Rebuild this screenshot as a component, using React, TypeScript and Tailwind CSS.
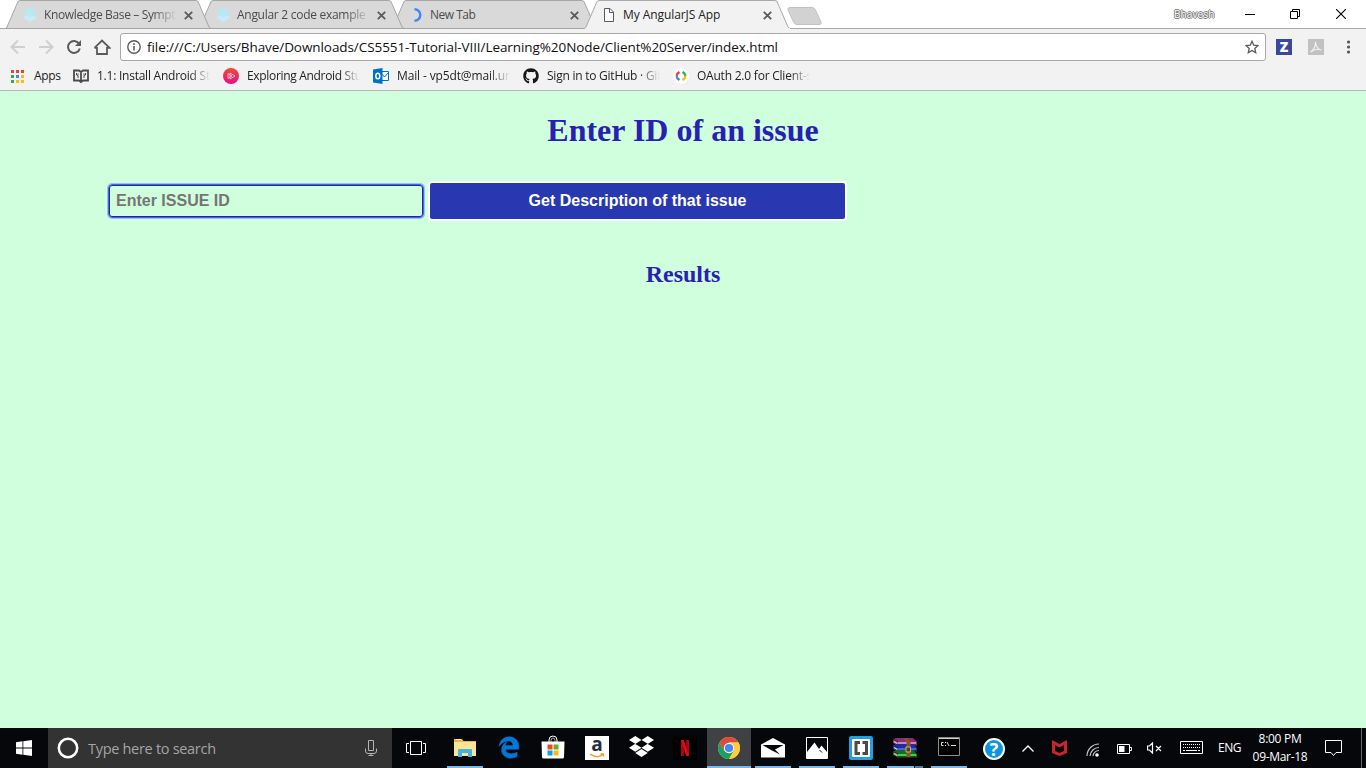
import React from "react";
import { FaDropbox, FaEdgeLegacy, FaGithub } from "react-icons/fa";

type IconProps = { w: number; h: number; className?: string; children: React.ReactNode };

function Icon({ w, h, className = "", children }: IconProps) {
  return (
    <svg width={w} height={h} viewBox={`0 0 ${w} ${h}`} fill="none" className={`block shrink-0 ${className}`}>
      {children}
    </svg>
  );
}

const fade = "[mask-image:linear-gradient(to_right,black_82%,transparent)]";

/* ---------- tab strip ---------- */

function LayersIcon() {
  return (
    <Icon w={16} h={16}>
      <path d="M8 6.500 15 10.500 8 15 1 10.500Z" fill="#c6edf7" />
      <path d="M8 .5 15 5.500 8 10.500 1 5.500Z" fill="#b4e9f6" />
    </Icon>
  );
}

function SpinnerIcon() {
  return (
    <Icon w={16} h={16}>
      <path d="M6.500 2.200A5.800 5.800 0 0 1 6.500 13.800" stroke="#4285f4" strokeWidth="2.400" />
    </Icon>
  );
}

function FileIcon() {
  return (
    <Icon w={16} h={16}>
      <path d="M3.500 1.500H9L12.500 5V14.500H3.500Z" fill="#fafafa" stroke="#5a5a5a" />
      <path d="M8.500 1.500V5.500H12.500" stroke="#5a5a5a" />
    </Icon>
  );
}

function Tab({ title, icon, active = false, order, tracking, faded = false }: {
  title: string; icon: React.ReactNode; active?: boolean; order: string; tracking: string; faded?: boolean;
}) {
  return (
    <div className={`relative -mr-3 h-[29px] w-[205px] shrink-0 ${order}`}>
      <svg width="205" height="29" className="absolute inset-0">
        <path
          d="M0 28.500 1 27 12 1.500 14 .5H190L192 1.500 203 27 205 28.500"
          fill={active ? "#f2f2f2" : "#d9d9d9"}
          stroke={active ? "#a9a9a9" : "#a6a6a6"}
        />
        <path d="M0 28.500H205" stroke={active ? "#f2f2f2" : "#a6a6a6"} />
      </svg>
      <div className="relative flex h-full items-center pl-4">
        <span className="w-[22px]">{icon}</span>
        <span className={`w-[133px] overflow-hidden text-[12px] leading-4 whitespace-nowrap ${tracking} ${active ? "text-[#222]" : "text-[#4c4c4c]"} ${faded ? fade : ""}`}>
          {title}
        </span>
        <Icon w={9} h={9} className="mt-px ml-[7px]">
          <path d="M.8.8 8.200 8.200M8.200.8.8 8.200" stroke="#5a5a5a" strokeWidth="1.800" />
        </Icon>
      </div>
    </div>
  );
}

function TabStrip() {
  return (
    <div className="flex h-[29px] items-start bg-white pl-1.5 shadow-[inset_0_-1px_#a9a9a9]">
      <Tab title="Knowledge Base – Sympt" icon={<LayersIcon />} order="z-30" tracking="tracking-[-0.36px]" faded />
      <Tab title="Angular 2 code example -" icon={<LayersIcon />} order="z-20" tracking="tracking-[-0.28px]" faded />
      <Tab title="New Tab" icon={<SpinnerIcon />} order="z-10" tracking="tracking-[-0.5px]" />
      <Tab title="My AngularJS App" icon={<FileIcon />} active order="z-40" tracking="tracking-[-0.08px]" />
      <Icon w={36} h={18} className="mt-[7px] ml-[9px]">
        <path d="M3 .5H25Q27.500.5 28.500 3L34 15Q35 17.500 32 17.500H10Q7.500 17.500 6.500 15L1 3Q.5.5 3 .5Z" fill="#d2d2d2" stroke="#c2c2c2" />
      </Icon>
      <div className="ml-auto flex h-[27px] items-center">
        <span className="mr-[31px] w-10 text-[10px] leading-3 tracking-[0.1px] text-white [text-shadow:1px_0_#777,-1px_0_#777,0_1px_#777,0_-1px_#777]">Bhavesh</span>
        <Icon w={10} h={10} className="mr-[35px]"><path d="M0 5.500H10" stroke="#000" /></Icon>
        <Icon w={10} h={10} className="mr-[36px]">
          <path d="M.5 2.500H7.500V9.500H.5ZM2.500 2.500V.5H9.500V7.500H7.500" stroke="#000" />
        </Icon>
        <Icon w={10} h={10} className="mr-5"><path d="M0 0 10 10M10 0 0 10" stroke="#000" strokeWidth="1.100" /></Icon>
      </div>
    </div>
  );
}

/* ---------- toolbar ---------- */

function Toolbar() {
  return (
    <div className="flex h-9 items-center pl-[10px]">
      <Icon w={16} h={16} className="mr-3">
        <path d="M15 8H2M8 1.500 1.500 8 8 14.500" stroke="#cfcfcf" strokeWidth="2" />
      </Icon>
      <Icon w={16} h={16} className="mr-3">
        <path d="M1 8H14M8 1.500 14.500 8 8 14.500" stroke="#cfcfcf" strokeWidth="2" />
      </Icon>
      <Icon w={16} h={16} className="mr-[11px]">
        <path d="M13 4.600A6 6 0 1 0 13.800 9.500" stroke="#5a5a5a" strokeWidth="2" />
        <path d="M15 1V7H9Z" fill="#5a5a5a" />
      </Icon>
      <Icon w={18} h={18} className="mr-[9px]">
        <path d="M4 9V16H14V9M1.500 9.800 9 2.500 16.500 9.800H13.500M1.500 9.800H4.500" stroke="#5a5a5a" strokeWidth="1.800" />
      </Icon>
      <div className="flex h-7 w-[1146px] items-center rounded-[3px] border border-[#a8a8a8] bg-white pr-[6px] pl-[6px]">
        <Icon w={14} h={14}>
          <circle cx="7" cy="7" r="6.200" stroke="#5a5a5a" strokeWidth="1.400" />
          <path d="M7 6V10.500M7 3.300V4.900" stroke="#5a5a5a" strokeWidth="1.600" />
        </Icon>
        <span className="ml-[6px] text-[13.500px] leading-5 tracking-[-0.075px] whitespace-nowrap text-[#111]">
          file:///C:/Users/Bhave/Downloads/CS5551-Tutorial-VIII/Learning%20Node/Client%20Server/index.html
        </span>
        <Icon w={14} h={14} className="ml-auto">
          <path d="M7 1.300 8.700 5.200 13 5.600 9.800 8.400 10.700 12.700 7 10.400 3.300 12.700 4.200 8.400 1 5.600 5.300 5.200Z" stroke="#5a5a5a" strokeWidth="1.300" />
        </Icon>
      </div>
      <span className="ml-[10px] flex h-4 w-4 items-center justify-center bg-[#39489b] text-[14px] leading-4 font-extrabold text-white">Z</span>
      <Icon w={16} h={16} className="ml-4">
        <path d="M0 0H16V16H0Z" fill="#c1c1c1" />
        <path d="M2.500 13C5 11.500 8 7 7.500 3C8 8 10 10.500 13.500 11C10 9.500 6 10.500 2.500 13Z" stroke="#f1f1f1" strokeWidth="1.200" />
      </Icon>
      <Icon w={4} h={14} className="ml-[22px]">
        <circle cx="2.500" cy="2" r="1.600" fill="#5a5a5a" /><circle cx="2.500" cy="7" r="1.600" fill="#5a5a5a" /><circle cx="2.500" cy="12" r="1.600" fill="#5a5a5a" />
      </Icon>
    </div>
  );
}

/* ---------- bookmarks ---------- */

const appDots = ["#ea4335", "#ea4335", "#ea4335", "#34a853", "#4285f4", "#fbbc05", "#34a853", "#fbbc05", "#fbbc05"];

function Bookmark({ title, tracking, children }: { title: string; tracking: string; children: React.ReactNode }) {
  return (
    <div className="flex w-[150px] shrink-0 items-center gap-2">
      {children}
      <span className={`w-[113px] overflow-hidden text-[12px] leading-4 whitespace-nowrap text-[#222] ${tracking} ${fade}`}>{title}</span>
    </div>
  );
}

function BookmarkBar() {
  return (
    <div className="flex h-[26px] items-center border-b border-[#b6b6b6] pb-[3px] pl-[11px]">
      <Icon w={13} h={13}>
        {appDots.map((color, i) => (
          <rect key={i} x={(i % 3) * 5} y={Math.floor(i / 3) * 5} width="3" height="3" fill={color} />
        ))}
      </Icon>
      <span className="ml-[10px] w-[39px] text-[12px] leading-4 tracking-[-0.3px] text-[#222]">Apps</span>
      <Bookmark title="1.1: Install Android Stu" tracking="tracking-[-0.24px]">
        <Icon w={16} h={16}>
          <path d="M1 2.500H6L8 4 10 2.500H15V12.500H10L8 14 6 12.500H1ZM8 4V14" stroke="#4a4a4a" strokeWidth="1.800" />
          <path d="M3.500 5V7L5 7.500V10M12.500 5V7L11 7.500V10M5 5.500V7M11 5.500V7" stroke="#4a4a4a" />
        </Icon>
      </Bookmark>
      <Bookmark title="Exploring Android Stu" tracking="tracking-[-0.32px]">
        <Icon w={16} h={16}>
          <defs><linearGradient id="play" x1="0" y1="0" x2="0" y2="1"><stop stopColor="#ef4b32" /><stop offset="1" stopColor="#e90d8b" /></linearGradient></defs>
          <circle cx="8" cy="8" r="8" fill="url(#play)" />
          <path d="M5 5.500V10.500M7 5V11L12 8ZM5 5.500 9 8 5 10.500" stroke="#fbc3cf" strokeWidth=".9" />
        </Icon>
      </Bookmark>
      <Bookmark title="Mail - vp5dt@mail.umk" tracking="tracking-[-0.13px]">
        <Icon w={16} h={16}>
          <path d="M8 3.500H15.500V12.500H8M8 5 11.500 9 15.500 4.500" fill="#fff" stroke="#0072c6" />
          <path d="M0 1.500 9.500 0V16L0 14.500Z" fill="#0072c6" />
          <ellipse cx="4.800" cy="8" rx="2" ry="2.800" stroke="#fff" strokeWidth="1.500" />
        </Icon>
      </Bookmark>
      <Bookmark title="Sign in to GitHub · Git" tracking="tracking-[-0.24px]">
        <FaGithub className="h-4 w-4 shrink-0 text-[#191717]" />
      </Bookmark>
      <Bookmark title="OAuth 2.0 for Client-s" tracking="tracking-[-0.22px]">
        <Icon w={16} h={16}>
          <circle cx="8" cy="8" r="8" fill="#fff" />
          <path d="M6.500 4 4.500 5.500 3.500 8" stroke="#ea4335" strokeWidth="2.200" />
          <path d="M3.500 8 4.500 10.500 6.500 12" stroke="#4285f4" strokeWidth="2.200" />
          <path d="M9.500 4 11.500 5.500 12.500 8" stroke="#34a853" strokeWidth="2.200" />
          <path d="M12.500 8 11.500 10.500 9.500 12" stroke="#fbbc05" strokeWidth="2.200" />
        </Icon>
      </Bookmark>
    </div>
  );
}

/* ---------- page ---------- */

function IssuePage() {
  return (
    <main className="flex-1 bg-[#cfffdc] pt-[21px] text-[#2a1fb4]">
      <h1 className="text-center font-['Liberation_Serif',serif] text-[32px] leading-[37px] font-bold">Enter ID of an issue</h1>
      <div className="mt-8 flex h-10 items-center gap-1 pl-[108px] font-['Liberation_Sans',sans-serif] text-base font-bold">
        <input
          placeholder="Enter ISSUE ID"
          className="h-[34px] w-[316px] rounded-[4px] border border-[#4a63d8] bg-transparent px-[7px] pb-px shadow-[0_0_0_1px_#8fc8ee,inset_0_0_0_1px_#2a1fb4] outline-none placeholder:text-[#757575] placeholder:opacity-100"
        />
        <button className="h-10 w-[419px] rounded border-2 border-white bg-[#2838b0] pb-px text-white">Get Description of that issue</button>
      </div>
      <h2 className="mt-[39px] text-center font-['Liberation_Serif',serif] text-2xl leading-7 font-bold">Results</h2>
    </main>
  );
}

/* ---------- taskbar ---------- */

function Task({ open = false, active = false, grouped = false, children }: {
  open?: boolean; active?: boolean; grouped?: boolean; children: React.ReactNode;
}) {
  return (
    <div className={`flex h-10 w-11 shrink-0 flex-col items-center ${active ? "bg-[#404144]" : ""}`}>
      <div className="flex h-[38px] items-center justify-center pt-0.5">{children}</div>
      {(open || active) && (
        <div className={`flex h-0.5 justify-end bg-[#76b9ed] ${active ? "w-full" : "w-9"}`}>
          {grouped && <div className="w-[9px] border-l border-[#05070b] bg-[#4f7f9f]" />}
        </div>
      )}
    </div>
  );
}

function ChromeLogo() {
  return (
    <Icon w={22} h={22}>
      <circle cx="11" cy="11" r="11" fill="#ffcd40" />
      <path d="M1.500 5.500A11 11 0 0 1 20.500 5.500H11L6.200 13.700Z" fill="#dd4b3e" />
      <path d="M1.500 5.500A11 11 0 0 0 11 22L15.800 13.800 11 16 6.200 13.700Z" fill="#1aa15f" />
      <path d="M20.500 5.500A11 11 0 0 1 11 22L15.800 13.800 15 7 11 5.500Z" fill="#ffcd40" />
      <circle cx="11" cy="11" r="5.200" fill="#f1f1f1" />
      <circle cx="11" cy="11" r="4.100" fill="#4587f3" />
    </Icon>
  );
}

function WinRarLogo() {
  const books = [["#8a2f73", "#d585bd"], ["#1b2fa0", "#4a62e0"], ["#146b22", "#3fd13f"]];
  return (
    <Icon w={24} h={20}>
      {books.map(([dark, light], i) => (
        <g key={dark} transform={`translate(0 ${i * 6})`}>
          <path d="M0 1.500 3 0H20L24 4V7.500H5L0 5Z" fill={dark} />
          <path d="M5 4H23V6H5Z" fill={light} />
          <path d="M5 7H23M0 1.500 5 4" stroke="#3a1e38" />
          <path d="M1 3.500 4.500 5.500" stroke="#ded6c8" strokeWidth="1.400" />
        </g>
      ))}
      <path d="M11 0H14L17.500 4V19H13.500V4Z" fill="#8a5428" />
      <path d="M13 9H17.500V14H13Z" fill="#5b3a20" stroke="#c9b36a" />
    </Icon>
  );
}

function Taskbar() {
  return (
    <footer className="flex h-10 items-center bg-[#05070b] text-white">
      <div className="flex w-12 justify-center">
        <Icon w={16} h={16}>
          <path d="M0 2.200 6.500 1.300V7.500H0ZM7.300 1.200 16 0V7.500H7.300ZM0 8.500H6.500V14.700L0 13.800ZM7.300 8.500H16V16L7.300 14.800Z" fill="#fff" />
        </Icon>
      </div>
      <div className="flex h-10 w-[344px] items-center bg-[#333] pr-[15px] pl-[9px]">
        <Icon w={22} h={22}><circle cx="11" cy="11" r="9.200" stroke="#fff" strokeWidth="2.500" /></Icon>
        <span className="mt-px ml-[9px] text-[14.500px] leading-5 tracking-[-0.3px] text-[#a5a5a5]">Type here to search</span>
        <Icon w={12} h={18} className="-mt-px ml-auto">
          <path d="M3.500 1.500H8.500V11.500H3.500ZM.5 9.500V12Q.5 14.500 3 14.500H9Q11.500 14.500 11.500 12V9.500M6 14V16.500M3.500 16.500H8.500" stroke="#b5b5b5" />
        </Icon>
      </div>
      <div className="flex w-[51px] justify-center pr-[3px]">
        <Icon w={20} h={14} className="-mt-px">
          <path d="M4.500.5H15.500V13.500H4.500ZM3 2.500H.5V11.500H3M17 2.500H19.500V11.500H17" stroke="#fff" />
        </Icon>
      </div>
      <Task open>
        <Icon w={22} h={20}>
          <path d="M0 1H8L9.500 3H22V18H0Z" fill="#e8b64c" />
          <path d="M0 4H22V18H0Z" fill="#fde493" />
          <path d="M2 1.500H7" stroke="#fff1c0" />
          <path d="M4 19V12Q4 11 5 11H17Q18 11 18 12V19H14V15H8V19Z" fill="#3fb4e5" />
        </Icon>
      </Task>
      <Task><FaEdgeLegacy className="-mt-px h-[23px] w-[22px] stroke-[#0078d7] stroke-[12px] text-[#0078d7]" /></Task>
      <Task>
        <Icon w={24} h={24} className="-mt-0.5">
          <path d="M8 8V5Q8 1 12 1Q16 1 16 5V8" stroke="#fff" />
          <path d="M10 8V5.500Q10 3 12 3Q14 3 14 5.500V8" stroke="#aaa" />
          <path d="M.5 6.500H23.500L23 22Q23 23.500 21.500 23.500H2.500Q1 23.500 1 22Z" fill="#fff" />
          <path d="M6.500 9.500H11.500V14.500H6.500Z" fill="#e74a24" /><path d="M12.500 9.500H17.500V14.500H12.500Z" fill="#6cae1e" />
          <path d="M6.500 15.500H11.500V20.500H6.500Z" fill="#0a9fe8" /><path d="M12.500 15.500H17.500V20.500H12.500Z" fill="#fdb813" />
        </Icon>
      </Task>
      <Task>
        <div className="flex h-6 w-6 flex-col items-center bg-white text-[#232f3e]">
          <span className="-mt-px h-[18px] text-[19px] leading-[18px] font-bold">a</span>
          <Icon w={16} h={5}><path d="M1 1Q8 6 14 1.500M11.500 1H14.500V3.500" stroke="#f79a1e" strokeWidth="1.400" /></Icon>
        </div>
      </Task>
      <Task><FaDropbox className="-mt-1 h-[25px] w-[25px] text-white" /></Task>
      <Task>
        <Icon w={24} h={24}>
          <path d="M0 0H24V24H0Z" fill="#000" />
          <path d="M8 4H10.800V20H8ZM13.200 4H16V20H13.200Z" fill="#b1060f" />
          <path d="M8 4H10.800L16 20H13.200Z" fill="#e50914" />
        </Icon>
      </Task>
      <Task active><ChromeLogo /></Task>
      <Task open>
        <Icon w={24} h={20} className="-mt-px">
          <path d="M0 6.500 12 0 24 6.500V19.500H0Z" fill="#fff" />
          <path d="M1.500 7H22.500L14 11.500 19 16.500 10 12Z" fill="#05070b" />
        </Icon>
      </Task>
      <Task open>
        <Icon w={22} h={22}>
          <path d="M.5.5H21.500V21.500H.5Z" stroke="#fff" />
          <path d="M1 15 8.500 5.500 13 12 15.500 8.500 21 15V21H1Z" fill="#fff" />
          <path d="M13.500 13 16 15.500" stroke="#05070b" />
        </Icon>
      </Task>
      <Task open>
        <Icon w={24} h={24}>
          <rect width="24" height="24" rx="2" fill="#229fe0" />
          <rect x="3" y="3" width="18" height="18" rx="1" fill="#fff" />
          <path d="M11 6.500H7V17.500H11M13.500 6.500H17.500V17.500H13.500" stroke="#4a4a4a" strokeWidth="3" />
        </Icon>
      </Task>
      <Task open grouped><WinRarLogo /></Task>
      <Task open>
        <Icon w={22} h={20} className="-mt-0.5">
          <path d="M.5.5H21.500V18.500H.5Z" fill="#000" stroke="#8b8b8b" />
          <path d="M1 1.500H21" stroke="#cfcfcf" />
          <path d="M5.500 5.500H3.500V8.500H5.500M7.500 5V6M7.500 8V9M9 5 11 9M13 8.500H18" stroke="#ddd" />
        </Icon>
      </Task>
      <div className="flex w-[46px] justify-center">
        <span className="mt-0.5 flex h-[22px] w-[22px] items-center justify-center rounded-full border-2 border-white bg-[#0d96dc] text-[18px] leading-5 font-bold">?</span>
      </div>
      <Icon w={12} h={7} className="ml-[5px]"><path d="M.5 6.500 6 1 11.500 6.500" stroke="#fff" strokeWidth="1.300" /></Icon>
      <Icon w={15} h={16} className="ml-[18px]">
        <path d="M0 0 7.500 4 15 0V13L7.500 16 0 13ZM3 5V11L7.500 13 12 11V5L7.500 7.500Z" fill="#c8262c" fillRule="evenodd" />
      </Icon>
      <Icon w={14} h={14} className="mt-1 ml-[19px]">
        <path d="M1 13A12 12 0 0 1 13 1M4 13A9 9 0 0 1 13 4.500M7 13A6 6 0 0 1 13 7.500" stroke="#c4c4c4" strokeWidth="1.200" />
        <circle cx="11" cy="12" r="1.800" fill="#fff" />
      </Icon>
      <Icon w={15} h={10} className="mt-px ml-[17px]">
        <path d="M.5.5H12.500V9.500H.5ZM13 3.500H14.500V6.500H13" stroke="#fff" /><path d="M2 2H7.500V8H2Z" fill="#fff" />
      </Icon>
      <Icon w={15} h={12} className="ml-[15px]">
        <path d="M.5 4H2.500L5.500 1V11L2.500 8H.5ZM9 4 14 9M14 4 9 9" stroke="#fff" strokeWidth="1.200" />
      </Icon>
      <Icon w={23} h={13} className="-mt-px ml-[18px]">
        <path d="M.5.5H22.500V12.500H.5Z" stroke="#fff" />
        <path d="M3 3.500H21M3 6.500H21" stroke="#fff" strokeDasharray="1 1" /><path d="M3 9.500H5M6 9.500H17M18 9.500H20" stroke="#fff" />
      </Icon>
      <span className="ml-[15px] w-6 text-[12px] leading-4 tracking-[-0.5px]">ENG</span>
      <div className="ml-[9px] w-[58px] text-center text-[12px] leading-[18px] tracking-[-0.3px] whitespace-nowrap">
        <div>8:00 PM</div>
        <div>09-Mar-18</div>
      </div>
      <Icon w={17} h={17} className="ml-4">
        <path d="M.5.5H16.500V12.500H11L8.500 15.500 6 12.500H.5Z" stroke="#fff" />
      </Icon>
      <div className="ml-auto h-10 w-[5px] border-l border-[#666]" />
    </footer>
  );
}

export default function App() {
  return (
    <div className="flex h-[768px] w-[1366px] flex-col overflow-hidden bg-[#f2f2f2] font-['Open_Sans','Noto_Sans',sans-serif]">
      <TabStrip />
      <Toolbar />
      <BookmarkBar />
      <IssuePage />
      <Taskbar />
    </div>
  );
}
